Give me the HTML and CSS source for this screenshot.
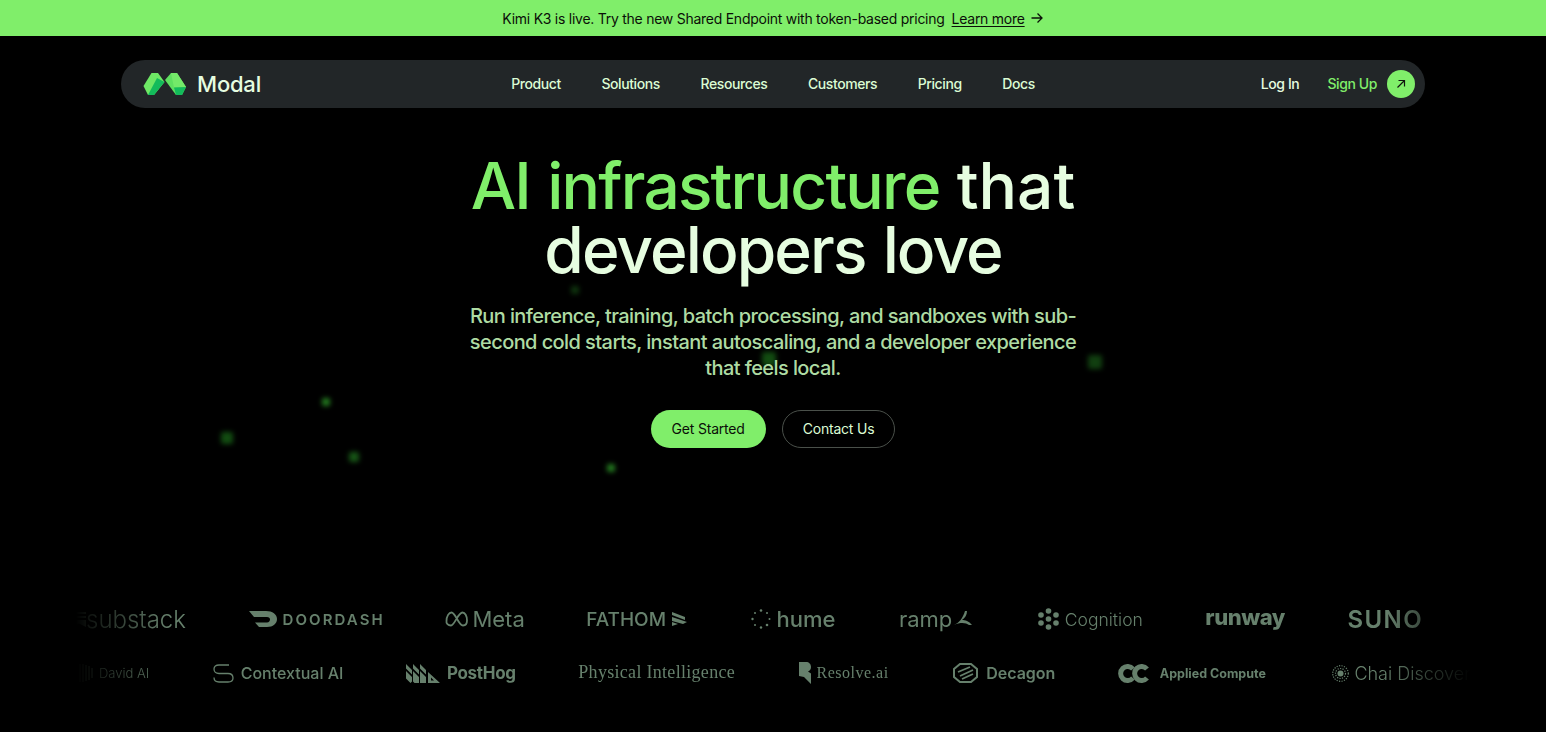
FILE: index.html
```html
<!DOCTYPE html>
<html lang="en">
<head>
    <meta charset="UTF-8">
    <meta name="viewport" content="width=device-width, initial-scale=1.0">
    <title>Modal: AI infrastructure that developers love</title>
    <link rel="stylesheet" href="styles.css">
</head>
<body>
    <div class="banner">
        <span>Kimi K3 is live. Try the new Shared Endpoint with token-based pricing</span>
        <a class="banner-link" href="#">Learn more</a>
        <svg class="banner-arrow" width="14" height="14" viewBox="0 0 14 14" fill="none" stroke="#0b0f08" stroke-width="1.3"><path d="M1.5 7h10.500M7.500 2.500 12 7l-4.500 4.500"/></svg>
    </div>

    <div class="sparks">
        <i class="spark s1"></i><i class="spark s2"></i><i class="spark s3"></i><i class="spark s4"></i>
        <i class="spark s5"></i><i class="spark s6"></i><i class="spark s7"></i>
    </div>

    <nav class="nav">
        <a class="brand" href="#">
            <svg width="44" height="24" viewBox="0 0 44 24">
                <path d="M.5 14 8.500 1H15l6.500 9L11 23H5z" fill="#6ee865"/>
                <path d="M5 23 14 6l7.500 4L11 23z" fill="#13bb5b"/>
                <path d="M22 8l6-7h6l9 14-4 8h-6z" fill="#5fe060"/>
                <path d="M28 1h6l9 14-12 .5z" fill="#74ea69"/>
                <path d="M31 15.500 43 15l-4 8h-6z" fill="#13bb5b"/>
            </svg>
            <span class="brand-name">Modal</span>
        </a>
        <div class="nav-links">
            <a href="#">Product</a>
            <a href="#">Solutions</a>
            <a href="#">Resources</a>
            <a href="#">Customers</a>
            <a href="#">Pricing</a>
            <a href="#">Docs</a>
        </div>
        <div class="nav-right">
            <a class="login" href="#">Log In</a>
            <a class="signup" href="#">Sign Up</a>
            <span class="signup-icon">
                <svg width="12" height="12" viewBox="0 0 12 12" fill="none" stroke="#10140e" stroke-width="1.2"><path d="M2.500 9.500 9.500 2.500M3.500 2.500h6v6"/></svg>
            </span>
        </div>
    </nav>

    <section class="hero">
        <h1><span class="accent">AI infrastructure</span> <span class="that">that</span><br>developers love</h1>
        <p>Run inference, training, batch processing, and sandboxes with sub-second cold starts, instant autoscaling, and a developer experience that feels local.</p>
        <div class="hero-buttons">
            <a class="btn btn-primary" href="#">Get Started</a>
            <a class="btn btn-outline" href="#">Contact Us</a>
        </div>
    </section>

    <section class="logos">
        <div class="logo-row row-top">
            <div class="logo substack">
                <svg width="14" height="15" viewBox="0 0 14 15" fill="currentColor"><path d="M0 0h14v2H0zM0 4h14v2H0zM0 8h14v7l-7-3.500L0 15z"/></svg>
                <span>substack</span>
            </div>
            <div class="logo doordash">
                <svg width="28" height="16" viewBox="0 0 28 16" fill="currentColor"><path d="M0 0H17C23.500 0 28 3.500 28 8 28 12.500 24 16 18 16H10L6 11.500H18C20 11.500 21 10 21 8.500 21 7 20 6 18 6H5z"/></svg>
                <span>DOORDASH</span>
            </div>
            <div class="logo meta">
                <svg width="24" height="16" viewBox="0 0 24 16" fill="none" stroke="currentColor" stroke-width="1.800"><path d="M1.500 10C1.500 5 4 1.500 6.500 1.500c4 0 7 13 11.500 13 2.500 0 4-2 4-5 0-4.500-2-8-4.500-8-4.500 0-8 13-11.500 13-3 0-5-2-4.500-4.500z"/></svg>
                <span>Meta</span>
            </div>
            <div class="logo fathom">
                <span>FATHOM</span>
                <svg width="15" height="14" viewBox="0 0 15 14" fill="currentColor"><path d="M0 0 13 5v3L0 3zM0 5l15 5-4 2-11-3zM0 10l6 2-6 2z"/></svg>
            </div>
            <div class="logo hume">
                <svg width="20" height="20" viewBox="0 0 20 20" fill="currentColor"><circle cx="10" cy="1.500" r="1.300"/><circle cx="16" cy="4" r="1"/><circle cx="18.500" cy="10" r="1"/><circle cx="16" cy="16" r="1.300"/><circle cx="10" cy="18.500" r="1.200"/><circle cx="4" cy="16" r="1"/><circle cx="1.500" cy="10" r="1.200"/><circle cx="4" cy="4" r="1"/></svg>
                <span>hume</span>
            </div>
            <div class="logo ramp">
                <span>ramp</span>
                <svg width="18" height="17" viewBox="0 0 18 17" fill="currentColor"><path d="M11 0h2c0 4-2 7-5 9 3 0 7 1 10 5h-3c-3-2-8-3-15 0 5-2 9-7 11-14z"/></svg>
            </div>
            <div class="logo cognition">
                <svg width="21" height="22" viewBox="0 0 21 22" fill="currentColor"><circle cx="10.500" cy="3" r="2.800"/><circle cx="3" cy="7" r="2.800"/><circle cx="18" cy="7" r="2.800"/><circle cx="10.500" cy="11" r="2.800"/><circle cx="3" cy="15" r="2.800"/><circle cx="18" cy="15" r="2.800"/><circle cx="10.500" cy="19" r="2.800"/></svg>
                <span>Cognition</span>
            </div>
            <div class="logo runway"><span>runway</span></div>
            <div class="logo suno"><span>SUNO</span></div>
        </div>
        <div class="logo-row row-bottom">
            <div class="logo david">
                <svg width="14" height="18" viewBox="0 0 14 18" fill="none" stroke="currentColor"><path d="M1 0v18M4 0v18M7 1v16M10 2v14M13 4v10"/></svg>
                <span>David AI</span>
            </div>
            <div class="logo contextual">
                <svg width="21" height="19" viewBox="0 0 21 19" fill="none" stroke="currentColor" stroke-width="1.300"><path d="M16 1H6C3 1 1 2.500 1 5s2 4.500 5 4.500h9c3 0 5 1.500 5 4.500s-2 4-5 4H6c-3 0-5-1-5-4.500"/></svg>
                <span>Contextual AI</span>
            </div>
            <div class="logo posthog">
                <svg width="34" height="19" viewBox="0 0 34 19" fill="currentColor"><path d="M0 0l6 6v4.500L0 4.500zM0 7l6 6v4.500L4.500 19 0 14.500zM7 0l6 6v4.500L7 4.500zM7 7l6 6v6H8.500L7 17.500zM14 0l6 6v4.500l-6-6zM14 7l6 6v6h-6zM22 8l12 11H22zM25 13.500v3h3z"/></svg>
                <span>PostHog</span>
            </div>
            <div class="logo physical"><span>Physical Intelligence</span></div>
            <div class="logo resolve">
                <svg width="12" height="22" viewBox="0 0 12 22" fill="currentColor"><path d="M0 0h7c3 0 5 2 5 5 0 2-1 3.500-3 4.500l3 2V22l-7-7-5-1z"/></svg>
                <span>Resolve.ai</span>
            </div>
            <div class="logo decagon">
                <svg width="25" height="20" viewBox="0 0 25 20" fill="none" stroke="currentColor" stroke-width="2"><path d="M7 1h11l6 5v8l-6 5H7l-6-5V6z"/><path d="M5 9 17 4M7 13l13-6M9 16l11-5" stroke-width="1.800"/></svg>
                <span>Decagon</span>
            </div>
            <div class="logo applied">
                <svg width="32" height="19" viewBox="0 0 32 19" fill="none" stroke="currentColor" stroke-width="5"><path d="M15 5a7 7 0 1 0 0 9"/><path d="M29 5a7 7 0 1 0 0 9"/></svg>
                <span>Applied Compute</span>
            </div>
            <div class="logo chai">
                <svg width="17" height="17" viewBox="0 0 17 17" fill="currentColor"><circle cx="8.500" cy="8.500" r="3"/><g fill="none" stroke="currentColor" stroke-width="1.200" stroke-dasharray="1.200 1.300"><circle cx="8.500" cy="8.500" r="5"/><circle cx="8.500" cy="8.500" r="7.800"/></g></svg>
                <span>Chai Discovery</span>
            </div>
        </div>
    </section>
</body>
</html>
```

FILE: styles.css
```css
* {
    box-sizing: border-box;
}
html, body {
    height: 100%;
}
body {
    margin: 0;
    background-color: #000;
    color: #dcfcd4;
    font-family: Inter, "Liberation Sans", sans-serif;
    overflow: hidden;
    position: relative;
}
a {
    color: inherit;
    text-decoration: none;
}

.banner {
    height: 36px;
    background-color: #80ee6a;
    color: #0b0f08;
    font-size: 14px;
    letter-spacing: -0.26px;
    display: flex;
    align-items: center;
    justify-content: center;
}
.banner-link {
    margin-left: 7px;
    text-decoration: underline;
    text-underline-offset: 2px;
}
.banner-arrow {
    margin-left: 5px;
}

.sparks {
    position: absolute;
    inset: 0;
    pointer-events: none;
}
.spark {
    position: absolute;
    background-color: #237a1f;
    filter: blur(2.5px);
    border-radius: 2px;
}
.s1 { left: 221px; top: 432px; width: 12px; height: 12px; background-color: #124c11; }
.s2 { left: 322px; top: 398px; width: 8px; height: 8px; }
.s3 { left: 349px; top: 452px; width: 10px; height: 10px; background-color: #175516; }
.s4 { left: 607px; top: 464px; width: 8px; height: 8px; }
.s5 { left: 571px; top: 286px; width: 8px; height: 8px; background-color: #0f350e; }
.s6 { left: 762px; top: 352px; width: 14px; height: 14px; background-color: #124c11; }
.s7 { left: 1088px; top: 355px; width: 14px; height: 14px; background-color: #113f10; }

.nav {
    position: relative;
    width: 1304px;
    height: 48px;
    margin: 24px auto 0;
    padding: 0 10px;
    background-color: #222628;
    border-radius: 24px;
    display: grid;
    grid-template-columns: 1fr auto 1fr;
    align-items: center;
    font-size: 14px;
    font-weight: 500;
    letter-spacing: -0.4px;
}
.brand {
    display: flex;
    align-items: center;
    gap: 10px;
    padding-left: 12px;
}
.brand-name {
    font-size: 22px;
    font-weight: 500;
    letter-spacing: -0.2px;
    color: #e6fde0;
}
.nav-links {
    display: flex;
    gap: 40.500px;
    padding-bottom: 2px;
    color: #dcfcd4;
}
.nav-right {
    display: flex;
    align-items: center;
    justify-content: flex-end;
    color: #e6fde0;
}
.login, .signup {
    padding-bottom: 2px;
}
.signup {
    margin-left: 28px;
    color: #80ee6a;
}
.signup-icon {
    width: 28px;
    height: 28px;
    margin-left: 10px;
    border-radius: 50%;
    background-color: #80ee6a;
    display: flex;
    align-items: center;
    justify-content: center;
}

.hero {
    position: relative;
    margin-top: 46px;
    text-align: center;
}
.hero h1 {
    margin: 0;
    font-size: 64px;
    line-height: 64px;
    font-weight: 500;
    letter-spacing: -1.9px;
    word-spacing: 2px;
    color: #e6fde0;
}
.accent {
    letter-spacing: -1.8px;
    color: #80ee6a;
}
.that {
    letter-spacing: 0;
}
.hero p {
    width: 624px;
    margin: 21px auto 0;
    font-size: 20px;
    line-height: 26px;
    font-weight: 500;
    letter-spacing: -0.58px;
    color: #aedba3;
}
.hero-buttons {
    display: flex;
    justify-content: center;
    gap: 16px;
    margin-top: 29px;
}
.btn {
    height: 38px;
    padding: 0 21px 1px;
    border-radius: 19px;
    font-size: 14px;
    letter-spacing: -0.2px;
    display: flex;
    align-items: center;
}
.btn-primary {
    background-color: #80ee6a;
    color: #0b0f08;
}
.btn-outline {
    padding: 0 20px 1px;
    border: 1px solid #4a504a;
    color: #dcfcd4;
}

.logos {
    position: absolute;
    left: 76px;
    right: 76px;
    top: 592px;
    overflow: hidden;
    color: #66806c;
    -webkit-mask-image: linear-gradient(90deg, transparent 0, #000 90px, #000 1310px, transparent 100%);
    mask-image: linear-gradient(90deg, transparent 0, #000 90px, #000 1310px, transparent 100%);
}
.logo-row {
    display: flex;
    align-items: center;
    gap: 63.500px;
    height: 54px;
    white-space: nowrap;
}
.row-top {
    margin-left: -4px;
}
.row-bottom {
    margin-left: 3px;
}
.logo {
    display: flex;
    align-items: center;
    flex: none;
    gap: 6px;
}
.substack { font-size: 24px; gap: 0; font-weight: 300; }
.doordash { font-size: 15px; font-weight: 600; letter-spacing: 0.14em; gap: 5px; margin-right: -3px; }
.meta { font-size: 22px; gap: 3px; font-weight: 400; margin-right: -2px; }
.fathom { font-size: 19px; font-weight: 500; }
.hume { font-size: 22px; font-weight: 500; }
.ramp { font-size: 22px; gap: 2px; margin-right: 2px; }
.cognition { font-size: 17.500px; font-weight: 300; margin-right: -1px; }
.runway { font-size: 22px; font-weight: 800; letter-spacing: -0.02em; margin-right: -1px; padding-bottom: 5px; }
.suno { font-size: 24px; font-weight: 600; letter-spacing: 0.06em; }
.david { font-size: 13px; font-weight: 300; gap: 6px; }
.contextual { font-size: 16px; font-weight: 500; gap: 7px; margin-right: -1px; }
.posthog { font-size: 17px; font-weight: 700; gap: 7px; letter-spacing: -0.3px; margin-right: -1px; }
.physical { font-family: "Liberation Serif", serif; font-size: 18px; letter-spacing: 0.3px; padding-bottom: 2px; }
.resolve { font-family: "Liberation Serif", serif; font-size: 16px; letter-spacing: 0.5px; gap: 6px; margin-right: 1px; }
.decagon { font-size: 16px; font-weight: 600; gap: 8px; margin-right: -1px; }
.applied { font-size: 12.500px; font-weight: 700; gap: 10px; margin-right: 3px; }
.chai { font-size: 18px; font-weight: 300; gap: 5px; }
```
